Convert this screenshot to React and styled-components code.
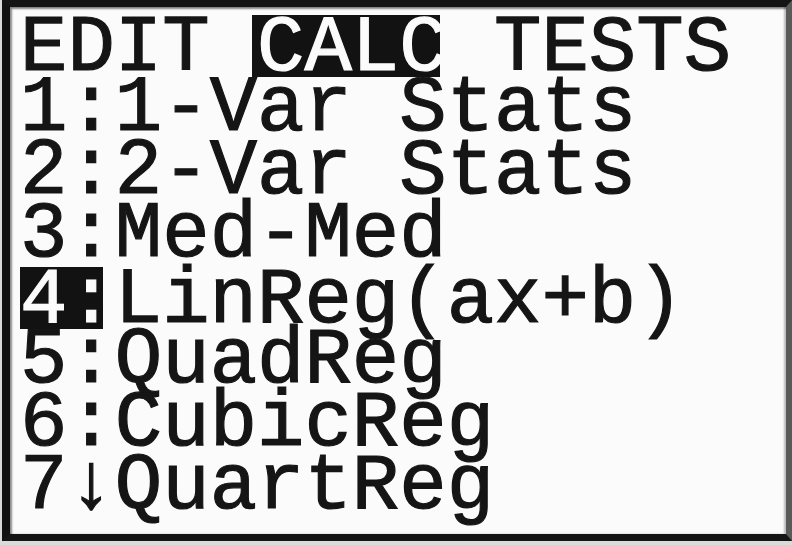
import React from "react";
import styled, { createGlobalStyle } from "styled-components";

const Global = createGlobalStyle`
  html, body { margin: 0; padding: 0; background: #e4e4e4; }
  #root { width: 792px; height: 545px; }
`;

const Bezel = styled.div`
  box-sizing: border-box;
  width: 792px;
  height: 545px;
  padding: 0 0 4px 2px;
  background: #dadada;
  display: flex;
`;

const Screen = styled.div`
  box-sizing: border-box;
  flex: 1;
  border-top: 7px solid #141414;
  border-left: 8px solid #111;
  border-bottom: 7px solid #151515;
  border-right: 6px solid #5a5a5a;
  box-shadow: inset 2px 2px 2px rgba(0, 0, 0, 0.45), inset -2px 0 2px rgba(0, 0, 0, 0.25);
  background: #fbfbfb;
  padding: 8px 0 0 10px;
  display: flex;
  flex-direction: column;
  overflow: hidden;
`;

const Row = styled.div`
  height: 63px;
  flex: none;
  font-family: "Liberation Mono", "DejaVu Sans Mono", monospace;
  font-size: 79px;
  line-height: 63px;
  white-space: pre;
  color: #151515;
  -webkit-text-stroke: 1.2px #151515;
`;

const Inverted = styled.span`
  display: inline-block;
  box-sizing: content-box;
  background: #121212;
  color: #fbfbfb;
  -webkit-text-stroke: 1.2px #fbfbfb;
  padding-top: 7px;
  line-height: 55px;
  height: 55px;
  width: ${(p) => p.$w}px;
  margin-right: ${(p) => p.$mr}px;
  box-shadow: ${(p) => (p.$lead ? `-${p.$lead}px 0 0 #121212` : "none")};
  vertical-align: baseline;
`;

export default function App() {
  return (
    <>
      <Global />
      <Bezel>
        <Screen>
          <Row>
            {"EDIT "}
            <Inverted $w={183} $mr={6.6} $lead={5}>CALC</Inverted>
            {" TESTS"}
          </Row>
          <Row>1:1-Var Stats</Row>
          <Row>2:2-Var Stats</Row>
          <Row>3:Med-Med</Row>
          <Row>
            <Inverted $w={83} $mr={11.8}>4:</Inverted>
            LinReg(ax+b)
          </Row>
          <Row>5:QuadReg</Row>
          <Row>6:CubicReg</Row>
          <Row>7↓QuartReg</Row>
        </Screen>
      </Bezel>
    </>
  );
}
